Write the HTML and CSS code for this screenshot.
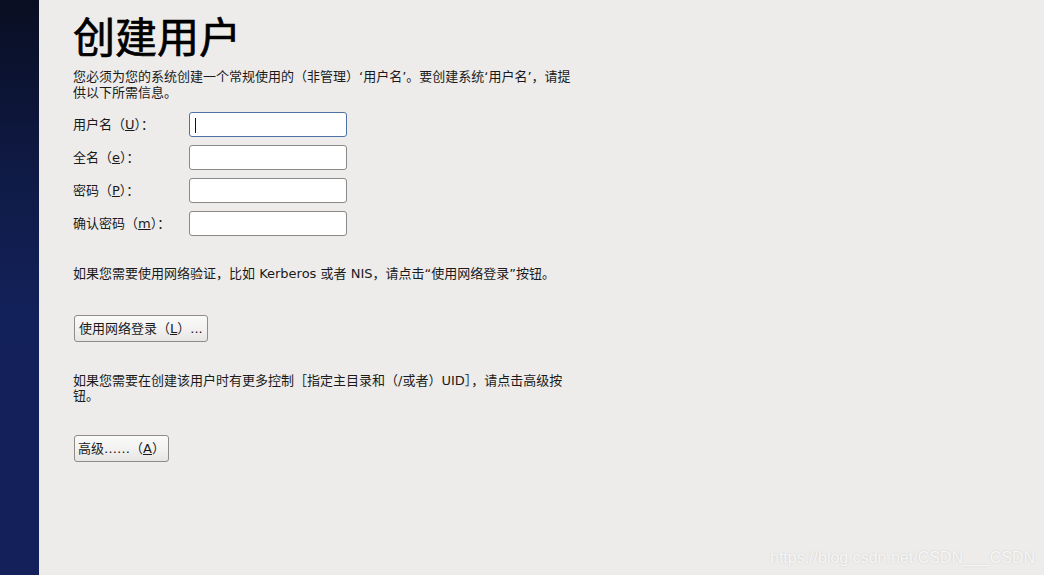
FILE: index.html
```html
<!DOCTYPE html>
<html lang="zh-CN">
<head>
<meta charset="utf-8">
<title>创建用户</title>
<link rel="stylesheet" href="styles.css">
</head>
<body>
<div class="window">
  <aside class="sidebar"></aside>
  <main class="content">
    <h1 class="title">创建用户</h1>
    <p class="intro">您必须为您的系统创建一个常规使用的（非管理）‘用户名’。要创建系统‘用户名’，请提<br>供以下所需信息。</p>
    <div class="form">
      <label class="label" for="u">用户名（<u>U</u>）：</label>
      <input class="field focused" id="u" type="text">
      <label class="label" for="e">全名（<u>e</u>）：</label>
      <input class="field" id="e" type="text">
      <label class="label" for="p">密码（<u>P</u>）：</label>
      <input class="field" id="p" type="password">
      <label class="label" for="m">确认密码（<u>m</u>）：</label>
      <input class="field" id="m" type="password">
    </div>
    <p class="note note-net">如果您需要使用网络验证，比如 Kerberos 或者 NIS，请点击“使用网络登录”按钮。</p>
    <button class="btn btn-net" type="button">使用网络登录（<u>L</u>）...</button>
    <p class="note note-adv">如果您需要在创建该用户时有更多控制［指定主目录和（/或者）UID］，请点击高级按<br>钮。</p>
    <button class="btn btn-adv" type="button">高级……（<u>A</u>）</button>
  </main>
</div>
<div class="watermark">https://blog.csdn.net/CSDN___CSDN</div>
</body>
</html>
```

FILE: styles.css
```css
html, body {
  margin: 0;
  padding: 0;
  height: 100%;
}

body {
  background: #edeceb;
  font-family: "DejaVu Sans", "Noto Sans CJK SC", sans-serif;
  color: #1a1a1a;
  font-size: 13px;
  overflow: hidden;
}

.window {
  display: flex;
  height: 575px;
}

.sidebar {
  width: 39px;
  flex: none;
  background: linear-gradient(to bottom, #090e22 0%, #0f1a45 30%, #13215a 55%, #13205a 100%);
}

.content {
  flex: 1;
  padding: 11px 0 0 34px;
  display: flex;
  flex-direction: column;
  align-items: flex-start;
}

.title {
  margin: 0;
  font-family: "Noto Sans CJK SC", sans-serif;
  font-weight: normal;
  font-size: 42px;
  line-height: 48px;
  color: #000;
  -webkit-text-stroke: 0.7px #000;
}

.intro {
  margin: 10px 0 0;
  line-height: 16px;
}

.form {
  margin-top: 11px;
  display: grid;
  grid-template-columns: 116px 158px;
  grid-auto-rows: 25px;
  row-gap: 8px;
  align-items: center;
}

.label {
  line-height: 16px;
}

.field {
  box-sizing: border-box;
  height: 25px;
  width: 158px;
  margin: 0;
  padding: 0 4px;
  border: 1px solid #8a8987;
  border-radius: 3px;
  background: #fff;
  outline: none;
  font: inherit;
}

.field.focused {
  border-color: #4f72a6;
  background: #fff linear-gradient(#111, #111) 5px 5px / 1px 15px no-repeat;
}

.note {
  margin: 0;
  line-height: 16px;
}

.note-net {
  margin-top: 30px;
}

.note-adv {
  margin-top: 31px;
  line-height: 15px;
}

.btn {
  box-sizing: border-box;
  height: 27px;
  margin: 0 0 0 1px;
  padding: 0 4px;
  border: 1px solid #8d8c8a;
  border-radius: 3px;
  background: linear-gradient(to bottom, #fafafa 0%, #f1f0ef 60%, #e6e5e3 100%);
  font: inherit;
  color: #1a1a1a;
  line-height: 16px;
}

.btn-net {
  margin-top: 33px;
}

.btn-adv {
  margin-top: 32px;
  padding: 0 3px;
}

.watermark {
  position: absolute;
  right: 9px;
  bottom: 8px;
  font-family: "Liberation Sans", Arial, sans-serif;
  font-size: 16px;
  color: #f6f6f5;
  text-shadow: 0 0 2px rgba(0, 0, 0, 0.14);
}
```
